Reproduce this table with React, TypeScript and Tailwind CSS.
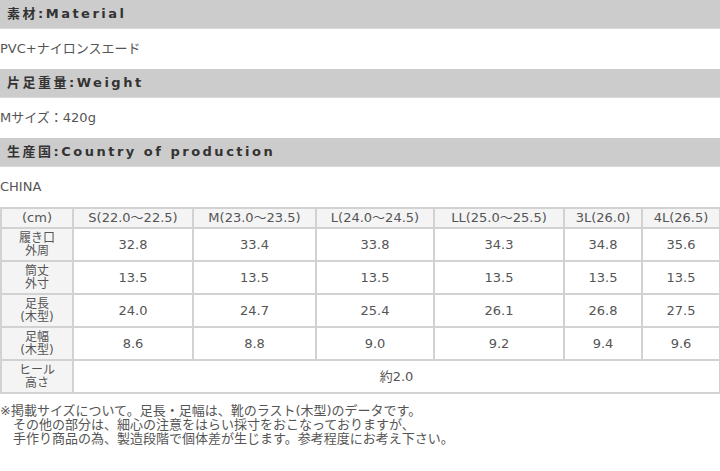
const FONT = "font-['DejaVu_Sans','Noto_Sans_CJK_JP',sans-serif]";

const SIZES = ['S(22.0～22.5)', 'M(23.0～23.5)', 'L(24.0～24.5)', 'LL(25.0～25.5)', '3L(26.0)', '4L(26.5)'];

const ROWS: { label: [string, string]; values: string[] }[] = [
  { label: ['履き口', '外周'], values: ['32.8', '33.4', '33.8', '34.3', '34.8', '35.6'] },
  { label: ['筒丈', '外寸'], values: ['13.5', '13.5', '13.5', '13.5', '13.5', '13.5'] },
  { label: ['足長', '(木型)'], values: ['24.0', '24.7', '25.4', '26.1', '26.8', '27.5'] },
  { label: ['足幅', '(木型)'], values: ['8.6', '8.8', '9.0', '9.2', '9.4', '9.6'] },
];

const COL_W = ['w-[72px]', 'w-[120px]', 'w-[123px]', 'w-[118px]', 'w-[130px]', 'w-[78px]', 'w-[78px]'];

function Heading({ children }: { children: React.ReactNode }) {
  return (
    <div className="h-[29px] bg-[#cccccc] border-b border-[#d8d8d8] flex items-center pl-[7px]">
      <span className="text-[13px] font-bold tracking-[2.5px] text-[#333]">{children}</span>
    </div>
  );
}

function Body({ children }: { children: React.ReactNode }) {
  return <div className="h-[40px] flex items-center text-[13px] text-[#555]">{children}</div>;
}

function Label({ lines }: { lines: [string, string] }) {
  return (
    <div className="flex flex-col items-center text-[12px] leading-[13px] text-[#555]">
      <span>{lines[0]}</span>
      <span>{lines[1]}</span>
    </div>
  );
}

export default function App() {
  return (
    <div className={`w-[720px] h-[471px] bg-white ${FONT}`}>
      <Heading>素材:Material</Heading>
      <Body>PVC+ナイロンスエード</Body>
      <Heading>片足重量:Weight</Heading>
      <Body>Mサイズ：420g</Body>
      <Heading>生産国:Country of production</Heading>
      <Body>CHINA</Body>

      <table className="w-[720px] border-collapse table-fixed text-[13px] text-[#555]">
        <colgroup>
          {COL_W.map((w, i) => (
            <col key={i} className={w} />
          ))}
        </colgroup>
        <thead>
          <tr className="h-[20px] bg-[#f4f4f4]">
            <th className="border-2 border-[#d2d2d2] font-normal p-0 leading-[16px]">(cm)</th>
            {SIZES.map((s) => (
              <th key={s} className="border-2 border-[#d2d2d2] font-normal p-0 leading-[16px]">
                {s}
              </th>
            ))}
          </tr>
        </thead>
        <tbody>
          {ROWS.map((row) => (
            <tr key={row.label[0]} className="h-[33px]">
              <td className="border-2 border-[#d2d2d2] bg-[#f4f4f4] p-0">
                <Label lines={row.label} />
              </td>
              {row.values.map((v, i) => (
                <td key={i} className="border-2 border-[#d2d2d2] text-center p-0">
                  {v}
                </td>
              ))}
            </tr>
          ))}
          <tr className="h-[33px]">
            <td className="border-2 border-[#d2d2d2] bg-[#f4f4f4] p-0">
              <Label lines={['ヒール', '高さ']} />
            </td>
            <td colSpan={6} className="border-2 border-[#d2d2d2] text-center p-0">
              約2.0
            </td>
          </tr>
        </tbody>
      </table>

      <div className="mt-[10px] text-[13px] leading-[14px] text-[#555] whitespace-pre">
        <p>※掲載サイズについて。足長・足幅は、靴のラスト(木型)のデータです。</p>
        <p>　その他の部分は、細心の注意をはらい採寸をおこなっておりますが、</p>
        <p>　手作り商品の為、製造段階で個体差が生じます。参考程度にお考え下さい。</p>
      </div>
    </div>
  );
}
